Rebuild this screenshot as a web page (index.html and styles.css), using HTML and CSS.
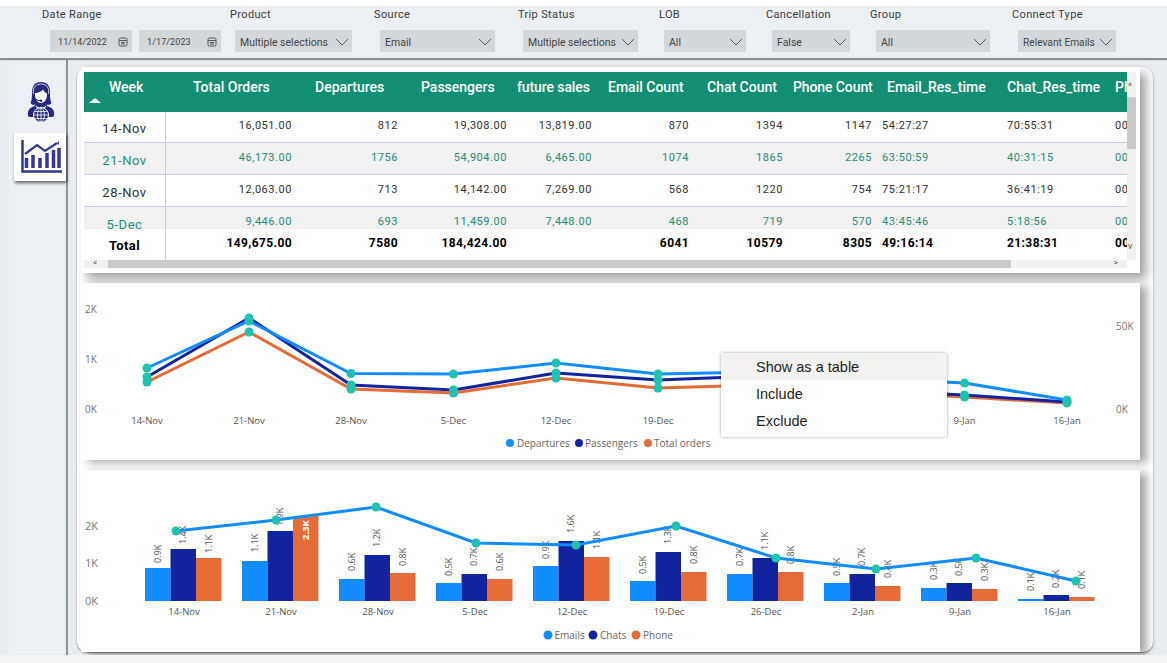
FILE: index.html
```html
<!DOCTYPE html>
<html lang="en">
<head>
<meta charset="utf-8">
<title>Orders report</title>
<link rel="stylesheet" href="styles.css">
</head>
<body>
<svg class="defs" width="0" height="0" aria-hidden="true">
  <symbol id="chev" viewBox="0 0 14 8"><path d="M1 1l6 6 6-6" fill="none" stroke="#5a5f63" stroke-width="1"/></symbol>
  <symbol id="cal" viewBox="0 0 10 10"><rect x="1" y="1" width="8" height="8" rx="1.5" fill="none" stroke="#555" stroke-width="1"/><path d="M1 3.5h8M3 5.5h4M3 7h4" stroke="#555" stroke-width="1"/></symbol>
</svg>

<header class="filters">
  <div class="filter f-date"><div class="flabel">Date Range</div>
    <div class="dates">
      <div class="date"><span>11/14/2022</span><svg class="calicon"><use href="#cal"/></svg></div>
      <div class="date"><span>1/17/2023</span><svg class="calicon"><use href="#cal"/></svg></div>
    </div>
  </div>
  <div class="filter f-product"><div class="flabel">Product</div><div class="dd"><span>Multiple selections</span><svg class="chev"><use href="#chev"/></svg></div></div>
  <div class="filter f-source"><div class="flabel">Source</div><div class="dd"><span>Email</span><svg class="chev"><use href="#chev"/></svg></div></div>
  <div class="filter f-trip"><div class="flabel">Trip Status</div><div class="dd"><span>Multiple selections</span><svg class="chev"><use href="#chev"/></svg></div></div>
  <div class="filter f-lob"><div class="flabel">LOB</div><div class="dd"><span>All</span><svg class="chev"><use href="#chev"/></svg></div></div>
  <div class="filter f-cancel"><div class="flabel">Cancellation</div><div class="dd"><span>False</span><svg class="chev"><use href="#chev"/></svg></div></div>
  <div class="filter f-group"><div class="flabel">Group</div><div class="dd"><span>All</span><svg class="chev"><use href="#chev"/></svg></div></div>
  <div class="filter f-connect"><div class="flabel">Connect Type</div><div class="dd"><span>Relevant Emails</span><svg class="chev"><use href="#chev"/></svg></div></div>
</header>

<div class="workspace">
  <nav class="rail">
    <svg class="agent" viewBox="0 0 28 41" width="28" height="41">
      <path d="M14 0C8 0 5 4 5 10c0 5 0 8-1.500 11 1.500 2 3.500 2 5 1.500L8 24c-4 1-6.500 3-7 6-.5 3 0 5 2 5h22c2 0 2.500-2 2-5-.5-3-3-5-7-6l-.5-1.500c1.500.5 3.500.5 5-1.500C23 18 23 15 23 10 23 4 20 0 14 0z" fill="#24287f"/>
      <path d="M8 11c3 0 7-2 8-3.500 1 2.500 3 3.500 4 4 .5 5.500-2.500 9.500-6 9.500s-6.500-4-6-10z" fill="#fff"/>
      <path d="M6.300 12V9.500C6.300 5 9.500 2 14 2s7.700 3 7.700 7.500V12" fill="none" stroke="#fff" stroke-width=".8"/>
      <path d="M7 14c.5 3 3 4.500 6 4.800" fill="none" stroke="#24287f" stroke-width="1"/>
      <circle cx="14" cy="18.800" r="1.200" fill="#24287f"/>
      <path d="M9 24.500l5 3 5-3" fill="none" stroke="#fff" stroke-width="1.200"/>
      <circle cx="14" cy="33" r="7.500" fill="#24287f" stroke="#fff" stroke-width="1"/>
      <path d="M7 33h14M8.200 29.500h11.600M8.200 36.500h11.600M14 26v14" stroke="#fff" stroke-width=".8" fill="none"/>
      <ellipse cx="14" cy="33" rx="3.500" ry="7" fill="none" stroke="#fff" stroke-width=".8"/>
    </svg>
    <div class="tab">
      <svg class="trend" viewBox="0 0 42 33" width="42" height="33">
        <path d="M1.500 0v31.500H41" fill="none" stroke="#32379c" stroke-width="2.500"/>
        <path d="M5.500 18v10M12 15v13M19 18v10M26 13v15M32.500 10v18M38 8v20" stroke="#32379c" stroke-width="3.500"/>
        <path d="M4 14l12-9 8 6 12-8" fill="none" stroke="#32379c" stroke-width="2.200"/>
        <path d="M36 3l2-2v4z" fill="#32379c"/>
      </svg>
    </div>
  </nav>

  <main class="panel">
    <section class="card card-table">
      <div class="tablewrap">
        <div class="row head">
          <div class="c">Week<i class="sort"></i></div><div class="c">Total Orders</div><div class="c">Departures</div><div class="c">Passengers</div><div class="c">future sales</div><div class="c">Email Count</div><div class="c">Chat Count</div><div class="c">Phone Count</div><div class="c">Email_Res_time</div><div class="c">Chat_Res_time</div><div class="c">Ph</div>
        </div>
        <div class="rows">
          <div class="row body"><div class="c">14-Nov</div><div class="c">16,051.00</div><div class="c">812</div><div class="c">19,308.00</div><div class="c">13,819.00</div><div class="c">870</div><div class="c">1394</div><div class="c">1147</div><div class="c">54:27:27</div><div class="c">70:55:31</div><div class="c">00</div></div>
          <div class="row body alt"><div class="c">21-Nov</div><div class="c">46,173.00</div><div class="c">1756</div><div class="c">54,904.00</div><div class="c">6,465.00</div><div class="c">1074</div><div class="c">1865</div><div class="c">2265</div><div class="c">63:50:59</div><div class="c">40:31:15</div><div class="c">00</div></div>
          <div class="row body"><div class="c">28-Nov</div><div class="c">12,063.00</div><div class="c">713</div><div class="c">14,142.00</div><div class="c">7,269.00</div><div class="c">568</div><div class="c">1220</div><div class="c">754</div><div class="c">75:21:17</div><div class="c">36:41:19</div><div class="c">00</div></div>
          <div class="row body alt"><div class="c">5-Dec</div><div class="c">9,446.00</div><div class="c">693</div><div class="c">11,459.00</div><div class="c">7,448.00</div><div class="c">468</div><div class="c">719</div><div class="c">570</div><div class="c">43:45:46</div><div class="c">5:18:56</div><div class="c">00</div></div>
        </div>
        <div class="row total"><div class="c">Total</div><div class="c">149,675.00</div><div class="c">7580</div><div class="c">184,424.00</div><div class="c"></div><div class="c">6041</div><div class="c">10579</div><div class="c">8305</div><div class="c">49:16:14</div><div class="c">21:38:31</div><div class="c">00</div></div>
        <div class="hbar"><span class="hthumb"></span><span class="arr arr-l">&lt;</span><span class="arr arr-r">&gt;</span></div>
      </div>
      <div class="vbar"><span class="varr-up">^</span><span class="vthumb"></span><span class="varr-down">v</span></div>
    </section>

    <section class="card card-line">
      <svg class="chart" viewBox="81 283 1059 177" width="1059" height="177">
        <g class="axis"><text x="85" y="313">2K</text><text x="85" y="363">1K</text><text x="85" y="413">0K</text><text x="1116" y="330">50K</text><text x="1116" y="413">0K</text></g>
        <g class="cats" text-anchor="middle"><text x="147" y="424">14-Nov</text><text x="249" y="424">21-Nov</text><text x="351" y="424">28-Nov</text><text x="453.500" y="424">5-Dec</text><text x="556" y="424">12-Dec</text><text x="658" y="424">19-Dec</text><text x="760" y="424">26-Dec</text><text x="862" y="424">2-Jan</text><text x="964.500" y="424">9-Jan</text><text x="1067" y="424">16-Jan</text></g>
        <polyline class="ln orange" points="147,382 249,332 351,389 453.500,393 556,378 658,388 760,385 862,392 964.500,397 1067,403"/>
        <polyline class="ln navy" points="147,377 249,318 351,385 453.500,390 556,373 658,380 760,376 862,390 964.500,395 1067,402"/>
        <polyline class="ln blue" points="147,368 249,321 351,373.500 453.500,374 556,363 658,374 760,372 862,378 964.500,383 1067,400"/>
        <g class="dots">
          <circle cx="147" cy="368" r="4.500"/><circle cx="147" cy="377" r="4.500"/><circle cx="147" cy="382" r="4.500"/>
          <circle cx="249" cy="318" r="4.500"/><circle cx="249" cy="321" r="4.500"/><circle cx="249" cy="332" r="4.500"/>
          <circle cx="351" cy="373.500" r="4.500"/><circle cx="351" cy="385" r="4.500"/><circle cx="351" cy="389" r="4.500"/>
          <circle cx="453.500" cy="374" r="4.500"/><circle cx="453.500" cy="390" r="4.500"/><circle cx="453.500" cy="393" r="4.500"/>
          <circle cx="556" cy="363" r="4.500"/><circle cx="556" cy="373" r="4.500"/><circle cx="556" cy="378" r="4.500"/>
          <circle cx="658" cy="374" r="4.500"/><circle cx="658" cy="380" r="4.500"/><circle cx="658" cy="388" r="4.500"/>
          <circle cx="964.500" cy="383" r="4.500"/><circle cx="964.500" cy="395" r="4.500"/><circle cx="964.500" cy="397" r="4.500"/>
          <circle cx="1067" cy="400" r="4.500"/><circle cx="1067" cy="402" r="4.500"/><circle cx="1067" cy="403" r="4.500"/>
        </g>
        <g class="legend">
          <circle class="f-blue" cx="510" cy="443" r="4"/><text x="517" y="447">Departures</text>
          <circle class="f-navy" cx="579" cy="443" r="4"/><text x="585" y="447">Passengers</text>
          <circle class="f-orange" cx="648" cy="443" r="4"/><text x="654" y="447">Total orders</text>
        </g>
      </svg>
      <div class="menu">
        <div class="mi hot">Show as a table</div>
        <div class="mi">Include</div>
        <div class="mi">Exclude</div>
      </div>
    </section>

    <section class="card card-bars">
      <svg class="chart" viewBox="81 470 1059 182" width="1059" height="182">
        <g class="axis big"><text x="85" y="530">2K</text><text x="85" y="567">1K</text><text x="85" y="605">0K</text></g>
        <g class="cats" text-anchor="middle"><text x="184" y="615">14-Nov</text><text x="281" y="615">21-Nov</text><text x="378" y="615">28-Nov</text><text x="475" y="615">5-Dec</text><text x="572" y="615">12-Dec</text><text x="669" y="615">19-Dec</text><text x="766" y="615">26-Dec</text><text x="863" y="615">2-Jan</text><text x="960" y="615">9-Jan</text><text x="1057" y="615">16-Jan</text></g>
        <g class="f-blue">
          <rect x="145" y="568" width="25.500" height="33"/><rect x="242" y="561" width="25.500" height="40"/><rect x="339" y="579" width="25.500" height="22"/><rect x="436" y="583" width="25.500" height="18"/><rect x="533" y="566" width="25.500" height="35"/><rect x="630" y="581" width="25.500" height="20"/><rect x="727" y="574" width="25.500" height="27"/><rect x="824" y="583" width="25.500" height="18"/><rect x="921" y="588" width="25.500" height="13"/><rect x="1018" y="599" width="25.500" height="2"/>
        </g>
        <g class="f-navy">
          <rect x="170.500" y="549" width="25.500" height="52"/><rect x="267.500" y="531" width="25.500" height="70"/><rect x="364.500" y="555" width="25.500" height="46"/><rect x="461.500" y="574" width="25.500" height="27"/><rect x="558.500" y="541" width="25.500" height="60"/><rect x="655.500" y="552" width="25.500" height="49"/><rect x="752.500" y="558" width="25.500" height="43"/><rect x="849.500" y="574" width="25.500" height="27"/><rect x="946.500" y="583" width="25.500" height="18"/><rect x="1043.500" y="595" width="25.500" height="6"/>
        </g>
        <g class="f-orange">
          <rect x="196" y="558" width="25.500" height="43"/><rect x="293" y="516" width="25.500" height="85"/><rect x="390" y="573" width="25.500" height="28"/><rect x="487" y="579" width="25.500" height="22"/><rect x="584" y="557" width="25.500" height="44"/><rect x="681" y="572" width="25.500" height="29"/><rect x="778" y="572" width="25.500" height="29"/><rect x="875" y="586" width="25.500" height="15"/><rect x="972" y="589" width="25.500" height="12"/><rect x="1069" y="597" width="25.500" height="4"/>
        </g>
        <g class="vals">
          <text transform="translate(161,563) rotate(-90)">0.9K</text><text transform="translate(186,544) rotate(-90)">1.4K</text><text transform="translate(212,553) rotate(-90)">1.1K</text>
          <text transform="translate(258,552) rotate(-90)">1.1K</text><text transform="translate(283,526) rotate(-90)">1.9K</text>
          <text transform="translate(355,571) rotate(-90)">0.6K</text><text transform="translate(380,547) rotate(-90)">1.2K</text><text transform="translate(406,566) rotate(-90)">0.8K</text>
          <text transform="translate(452,576) rotate(-90)">0.5K</text><text transform="translate(477,566) rotate(-90)">0.7K</text><text transform="translate(503,571) rotate(-90)">0.6K</text>
          <text transform="translate(549,559) rotate(-90)">0.9K</text><text transform="translate(574,533) rotate(-90)">1.6K</text><text transform="translate(600,549) rotate(-90)">1.1K</text>
          <text transform="translate(646,574) rotate(-90)">0.5K</text><text transform="translate(671,544) rotate(-90)">1.3K</text><text transform="translate(697,564) rotate(-90)">0.8K</text>
          <text transform="translate(743,566) rotate(-90)">0.7K</text><text transform="translate(768,550) rotate(-90)">1.1K</text><text transform="translate(794,564) rotate(-90)">0.8K</text>
          <text transform="translate(840,576) rotate(-90)">0.5K</text><text transform="translate(865,566) rotate(-90)">0.7K</text><text transform="translate(891,578) rotate(-90)">0.4K</text>
          <text transform="translate(937,580) rotate(-90)">0.3K</text><text transform="translate(962,576) rotate(-90)">0.5K</text><text transform="translate(988,581) rotate(-90)">0.3K</text>
          <text transform="translate(1034,591) rotate(-90)">0.1K</text><text transform="translate(1059,588) rotate(-90)">0.2K</text><text transform="translate(1085,589) rotate(-90)">0.1K</text>
        </g>
        <text class="inval" transform="translate(309,540) rotate(-90)">2.3K</text>
        <polyline class="ln blue" points="176,531 276,520 376,507 476,543 576,545 676,526 776,558 876,569 976,558 1076,581"/>
        <g class="dots">
          <circle cx="176" cy="531" r="4.500"/><circle cx="276" cy="520" r="4.500"/><circle cx="376" cy="507" r="4.500"/><circle cx="476" cy="543" r="4.500"/><circle cx="576" cy="545" r="4.500"/><circle cx="676" cy="526" r="4.500"/><circle cx="776" cy="558" r="4.500"/><circle cx="876" cy="569" r="4.500"/><circle cx="976" cy="558" r="4.500"/><circle cx="1076" cy="581" r="4.500"/>
        </g>
        <g class="legend">
          <circle class="f-blue" cx="548" cy="635" r="4.500"/><text x="554.500" y="639">Emails</text>
          <circle class="f-navy" cx="593" cy="635" r="4.500"/><text x="600" y="639">Chats</text>
          <circle class="f-orange" cx="636" cy="635" r="4.500"/><text x="643" y="639">Phone</text>
        </g>
      </svg>
    </section>
  </main>
</div>
<footer class="strip"></footer>
</body>
</html>
```

FILE: styles.css
```css
* { box-sizing: border-box; }
html, body { margin: 0; height: 663px; overflow: hidden; }
body {
  background: #fff;
  padding-top: 7px;
  font-family: Roboto, "Liberation Sans", sans-serif;
  display: flex;
  flex-direction: column;
}
.defs { position: absolute; }

/* filter bar */
.filters {
  height: 51px;
  flex: none;
  display: flex;
  padding-left: 42px;
  background: #eceff3;
  box-shadow: 0 1px 1px 1px #8a8d8f;
  position: relative;
  z-index: 3;
}
.flabel {
  height: 16px;
  line-height: 16px;
  font-size: 11px;
  letter-spacing: .35px;
  color: #3a3a3a;
  margin-bottom: 7px;
}
.f-date { width: 188px; }
.f-product { width: 144px; }
.f-source { width: 144px; }
.f-trip { width: 141px; }
.f-lob { width: 107px; }
.f-cancel { width: 104px; }
.f-group { width: 142px; }
.f-connect { width: 110px; }
.dates { display: flex; gap: 7px; margin-left: 8px; }
.date {
  width: 82px;
  height: 22px;
  background: #d3d7da;
  display: flex;
  align-items: center;
  justify-content: space-between;
  padding: 1px 4px 0 8px;
  font-size: 9px;
  letter-spacing: .1px;
  color: #444;
}
.calicon { width: 10px; height: 10px; }
.dd {
  height: 22px;
  margin-left: 6px;
  background: #d3d7da;
  display: flex;
  align-items: center;
  justify-content: space-between;
  padding: 2px 3px 0 5px;
  font-size: 10.500px;
  color: #444;
}
.dd span { white-space: nowrap; }
.chev { width: 14px; height: 8px; flex: none; }
.f-product .dd { width: 117px; margin-left: 5px; }
.f-source .dd { width: 115px; }
.f-trip .dd { width: 115px; margin-left: 5px; }
.f-lob .dd { width: 82px; margin-left: 5px; }
.f-cancel .dd { width: 78px; }
.f-group .dd { width: 114px; }
.f-connect .dd { width: 98px; }
.f-connect .dd span { font-size: 10.200px; }

/* page body */
.workspace {
  flex: none;
  height: 597px;
  display: flex;
  padding-left: 9px;
  background: #e9edf2;
}
.rail {
  width: 59px;
  background: #eceff3;
  border-right: 2px solid #8f9294;
  padding-top: 24px;
  display: flex;
  flex-direction: column;
  align-items: flex-start;
}
.agent { margin-left: 18px; }
.tab {
  width: 52px;
  height: 48px;
  margin: 10px 0 0 5px;
  background: #fff;
  box-shadow: 1px 2px 3px rgba(0,0,0,.6);
  padding: 7px 0 0 7px;
}
.trend { display: block; }
.panel {
  width: 1076px;
  height: 585px;
  margin: 9px 0 0 9px;
  background: #fff;
  border-radius: 10px;
  box-shadow: 0 1px 2px #777;
  padding: 0 13px 0 4px;
  display: flex;
  flex-direction: column;
  gap: 10px;
}
.card {
  background: #fff;
  box-shadow: 6px 6px 10px rgba(0,0,0,.38);
  position: relative;
}
.card-table { height: 206px; padding: 5px 0 0 3px; display: flex; }
.card-line { height: 177px; }
.card-bars { height: 182px; }
.card-line, .card-bars { box-shadow: 7px 3px 8px rgba(0,0,0,.34); }
.chart { display: block; }

/* table */
.tablewrap { width: 1043px; }
.row {
  display: grid;
  grid-template-columns: 82px 126px 106px 109px 85px 97px 94px 89px 125px 108px 22px;
}
.c { white-space: nowrap; overflow: hidden; text-align: right; }
.head {
  height: 40px;
  background: #128f73;
  color: #fff;
  font-size: 14px;
  font-weight: 500;
  line-height: 30px;
  position: relative;
  z-index: 1;
  overflow: hidden;
}
.head .c { text-align: left; overflow: visible; }
.head .c:nth-child(1) { padding-left: 25px; position: relative; }
.head .c:nth-child(2) { padding-left: 27px; }
.head .c:nth-child(3) { padding-left: 23px; }
.head .c:nth-child(4) { padding-left: 23px; }
.head .c:nth-child(5) { padding-left: 10px; letter-spacing: -.1px; }
.head .c:nth-child(6) { padding-left: 16px; }
.head .c:nth-child(7) { padding-left: 18px; }
.head .c:nth-child(8) { padding-left: 10px; letter-spacing: -.1px; }
.head .c:nth-child(9) { padding-left: 15px; }
.head .c:nth-child(10) { padding-left: 10px; }
.head .c:nth-child(11) { padding-left: 10px; }
.sort {
  position: absolute;
  left: 5px;
  top: 26px;
  border-left: 6px solid transparent;
  border-right: 6px solid transparent;
  border-bottom: 5px solid #fff;
}
.rows { height: 118px; margin-top: -1px; overflow: hidden; }
.body {
  height: 32px;
  font-size: 11px;
  letter-spacing: .55px;
  color: #333;
  border-bottom: 1px solid #cdc7e6;
  line-height: 29px;
}
.body .c:first-child, .total .c:first-child {
  text-align: center;
  border-right: 1px solid #cdc7e6;
}
.body .c:first-child { font-size: 13px; line-height: 36px; }
.body .c:nth-child(n+9), .total .c:nth-child(n+9) { text-align: left; padding-left: 10px; }
.alt { background: #f1f1f1; color: #1f8f78; }
.total {
  height: 31px;
  font-size: 12px;
  font-weight: 700;
  letter-spacing: .4px;
  color: #000;
  line-height: 29px;
}
.total .c:first-child { font-size: 13px; line-height: 33px; }
.hbar { height: 8px; background: #f0f0f0; position: relative; }
.hthumb { position: absolute; left: 24px; width: 903px; top: 0; bottom: 0; background: #c9c9c9; }
.arr { position: absolute; top: -2px; font-size: 8px; line-height: 10px; color: #444; }
.arr-l { left: 9px; }
.arr-r { right: 9px; }
.vbar { width: 9px; height: 188px; background: #f0f0f0; position: relative; }
.vthumb { position: absolute; left: 0; right: 0; top: 25px; height: 52px; background: #c9c9c9; }
.varr-up, .varr-down { position: absolute; left: 1px; font-size: 9px; line-height: 10px; color: #555; }
.varr-up { top: 9px; }
.varr-down { bottom: 9px; }

/* charts */
.chart text { font-family: "Open Sans", "Noto Sans", sans-serif; }
.axis text { font-size: 10px; fill: #777; }
.axis.big text { font-size: 11px; }
.cats text { font-size: 9.500px; fill: #555; }
.legend text { font-size: 10px; fill: #666; }
.vals text { font-size: 9px; fill: #555; }
.inval { font-size: 9.500px; font-weight: 700; fill: #fff; }
.ln { fill: none; stroke-width: 3; }
.blue { stroke: #118dff; }
.navy { stroke: #12239e; }
.orange { stroke: #e66c37; }
.f-blue { fill: #118dff; }
.f-navy { fill: #12239e; }
.f-orange { fill: #e66c37; }
.dots { fill: #1fc2ae; }

/* context menu */
.menu {
  position: absolute;
  left: 640px;
  top: 70px;
  width: 226px;
  height: 84px;
  background: #fff;
  border-radius: 2px;
  box-shadow: 0 0 3px rgba(0,0,0,.4);
  font-family: "Liberation Sans", Arial, sans-serif;
  font-size: 14.500px;
  color: #252423;
}
.mi { height: 27px; line-height: 29px; padding-left: 35px; }
.hot { background: #f3f2f1; }

.strip { flex: 1; background: #f3f3f3; position: relative; z-index: 2; }
```
